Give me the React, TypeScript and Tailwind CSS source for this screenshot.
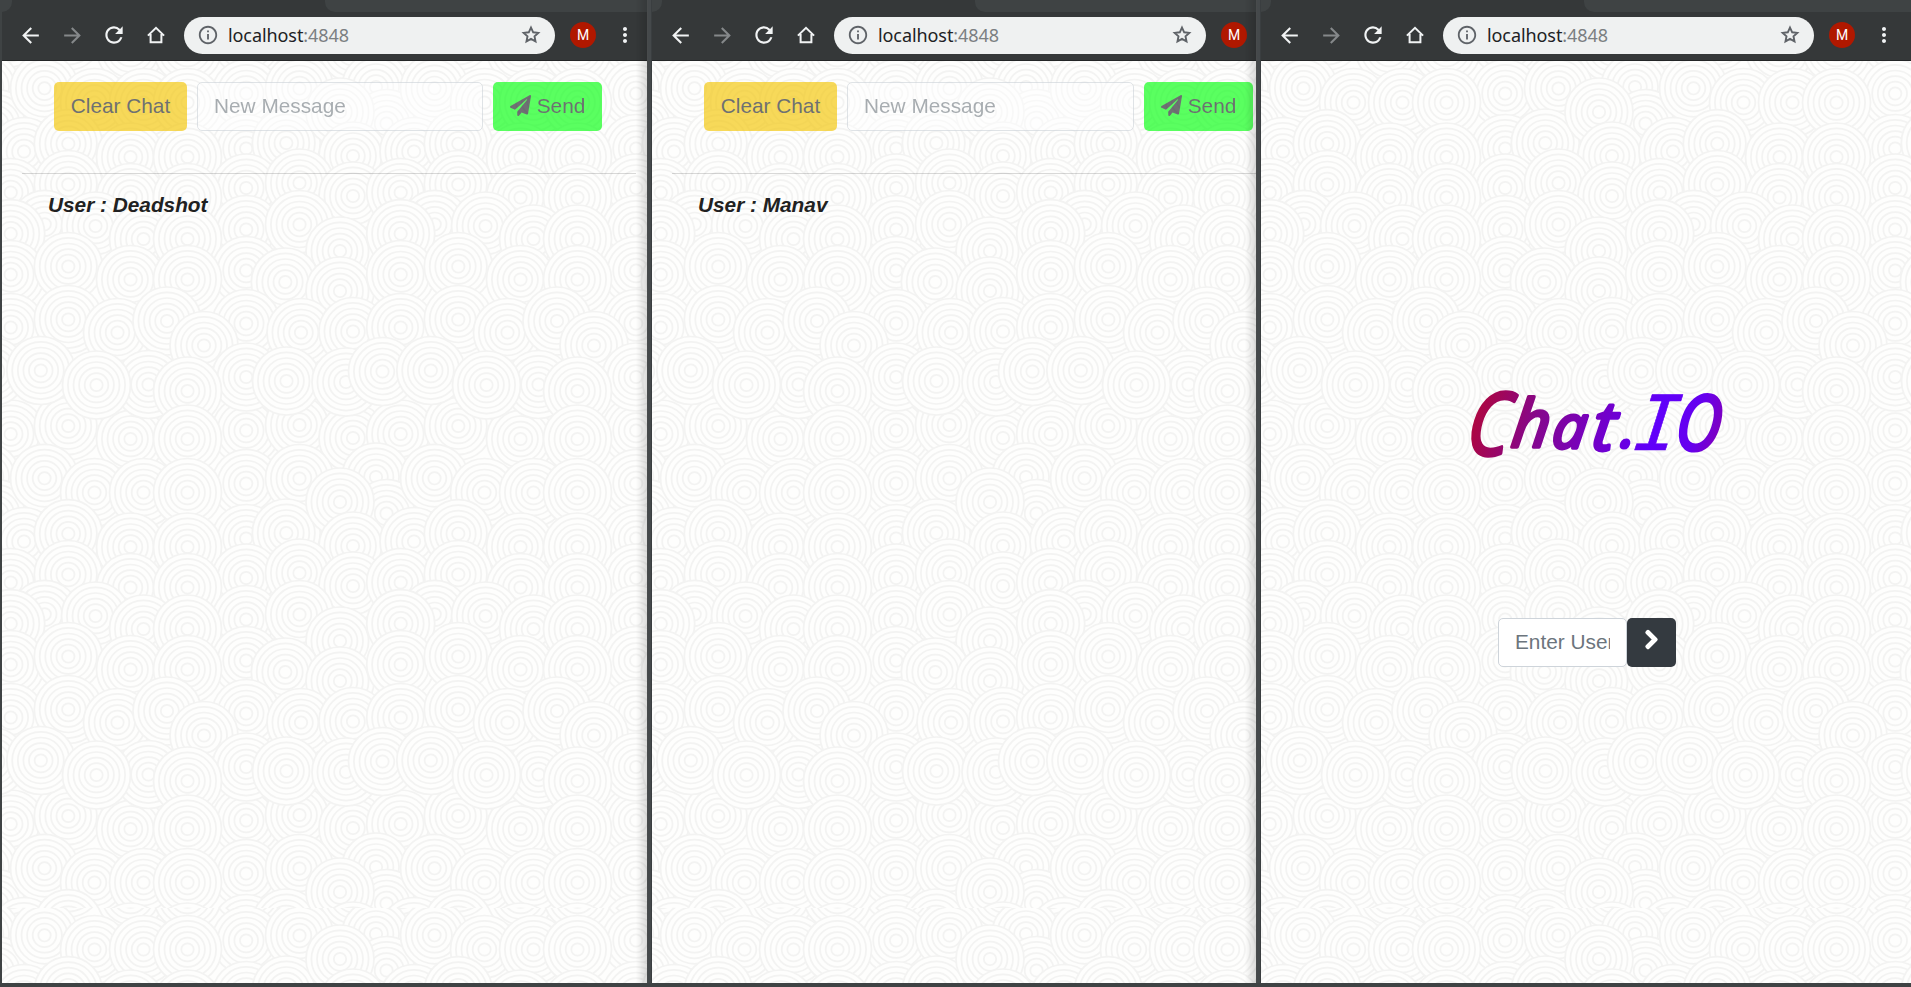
import type { ReactNode } from "react";
import {
  MdArrowBack,
  MdArrowForward,
  MdInfoOutline,
  MdMoreVert,
  MdRefresh,
} from "react-icons/md";
import { FaChevronRight, FaPaperPlane } from "react-icons/fa";

type Point = [number, number];

const TILE = 390;
const RADII = [28.6, 23, 17.4, 11.8, 6.2];

// Centres of the wallpaper's discs, in painting order; each layer wraps horizontally.
const LAYERS: Point[][] = [
  [[374, 26], [384.5, 62.5], [244.2, 32.5]],
  [[297.5, 27.5], [432.5, 27.3], [482.5, 41.5], [531.5, 41.5], [575.5, 41.5]],
  [[244.2, 87.5], [284.3, 82], [338, 51]],
  [[351, 95], [412, 90.5], [456.3, 82.7], [518.5, 96], [575.5, 96]],
  [[244.2, 127]],
  [[297.5, 122], [351, 135], [398.7, 131.5], [456.3, 123.5], [518.5, 136.5], [575.5, 136.5]],
  [[244.2, 168.5]],
  [[297.5, 163.5], [338, 190], [432.7, 163.3], [398.7, 172.7], [483.5, 165], [531.5, 178], [575.5, 178]],
  [[244.2, 209.5]],
  [[283.3, 221], [338, 230], [398.7, 213.5], [456.3, 205.5], [518.5, 218.5], [575.5, 218.5]],
  [[244.2, 262.5]],
  [[299, 271.5], [351, 270.5], [398.7, 266.5], [456.3, 258.5], [505.5, 271.5], [555, 260], [592, 284.5]],
  [[244.2, 369.5]],
  [[297.5, 364], [351, 377], [398.7, 373], [456.3, 365], [518.5, 378]],
  [[244.2, 316]],
  [[284.5, 320], [344, 321], [380.5, 310.5], [428.8, 309.5], [536.5, 323.5], [484.5, 324], [575.5, 330]],
  [[185.5, 378]],
];

const DISCS: Point[] = [-1, 0, 1].flatMap((row) =>
  LAYERS.flatMap((layer) =>
    [-2, -1, 0, 1].flatMap((col) =>
      layer.map(([x, y]): Point => [x + col * TILE, y + row * TILE]),
    ),
  ),
).filter(([x, y]) => x > -36 && x < TILE + 36 && y > -36 && y < TILE + 36);

function Wallpaper({ id }: { id: string }) {
  return (
    <svg className="absolute inset-0 h-full w-full" aria-hidden="true">
      <defs>
        <pattern id={id} width={TILE} height={TILE} patternUnits="userSpaceOnUse">
          <rect width={TILE} height={TILE} fill="#fefefd" />
          {DISCS.map(([x, y], i) => (
            <g key={i} stroke="#f3f3f2" strokeWidth="1.7" fill="#fefefd">
              <circle cx={x} cy={y} r="34" />
              {RADII.map((r) => (
                <circle key={r} cx={x} cy={y} r={r} fill="none" />
              ))}
            </g>
          ))}
        </pattern>
      </defs>
      <rect width="100%" height="847" fill={`url(#${id})`} />
      <g transform="translate(0 847)">
        <rect width="100%" height="100" fill={`url(#${id})`} />
      </g>
    </svg>
  );
}

function HomeIcon() {
  return (
    <svg width="18" height="18" viewBox="0 0 18 18" fill="none" stroke="#f1f3f4" strokeWidth="2">
      <path d="M0.9 9.6 9 1.8l8.100 7.800M3.600 8v8.200h10.800V8" />
    </svg>
  );
}

function StarIcon() {
  return (
    <svg width="22" height="22" viewBox="0 0 22 22" fill="none" stroke="#5f6368" strokeWidth="1.9">
      <path d="M11 3.600 13.200 8.300 18.300 8.900 14.500 12.300 15.500 17.300 11 14.800 6.500 17.300 7.500 12.300 3.700 8.900 8.800 8.300Z" />
    </svg>
  );
}

function Toolbar({ wide }: { wide?: boolean }) {
  return (
    <div className="shrink-0 bg-[#353839]">
      <div className="flex h-3 justify-between">
        <div className="w-[10px] rounded-br-[10px] bg-[#3f4344]" />
        <div className="w-[327px] rounded-bl-[10px] bg-[#3f4344]" />
      </div>
      <div className="flex h-[49px] items-center border-b border-[#242627] pb-[2px] text-[#f1f3f4]">
        <div className="flex w-[182px] items-center pl-4">
          <MdArrowBack size={25} />
          <MdArrowForward size={25} className="ml-[17px] text-[#85888a]" />
          <MdRefresh size={26} className="ml-4" />
          <span className="ml-5">
            <HomeIcon />
          </span>
        </div>
        <div
          className={`flex h-[37px] shrink-0 items-center rounded-full bg-[#eff1f1] pr-[13px] pl-[13px] text-[#5f6368] ${wide ? "w-[372px]" : "w-[371px]"}`}
        >
          <MdInfoOutline size={22} />
          <span className="ml-[9px] flex-1 font-['Noto_Sans','Open_Sans',sans-serif] text-[18px] leading-none tracking-[-0.080px] text-[#7b7f82]">
            <span className="text-[#202124]">localhost</span>:4848
          </span>
          <StarIcon />
        </div>
        <div className="ml-[15px] flex size-[26px] shrink-0 items-center justify-center rounded-full bg-[#b01800] font-['Roboto',sans-serif] text-[14px] text-white">
          M
        </div>
        <MdMoreVert size={24} className="ml-[17px] shrink-0" />
      </div>
    </div>
  );
}

function Browser({ id, wide, children }: { id: string; wide?: boolean; children: ReactNode }) {
  return (
    <div className="flex h-full w-[650px] shrink-0 flex-col">
      <Toolbar wide={wide} />
      <div className="relative flex-1 overflow-hidden">
        <Wallpaper id={id} />
        <div className="relative h-full">{children}</div>
      </div>
    </div>
  );
}

function ChatPage({ user, wide }: { user: string; wide?: boolean }) {
  return (
    <div className="pt-[21px] pl-5 text-[20.8px]">
      <div className="flex h-[49px] gap-[10px] pl-8 opacity-65">
        <button className="w-[133px] rounded-[5px] bg-[#f3c500] pb-[2px] text-[#212529]">Clear Chat</button>
        <input
          className={`rounded-[5px] border border-[#ced4da] bg-white/70 px-4 pb-[2px] placeholder:text-[#6c757d] placeholder:opacity-90 ${wide ? "w-[287px]" : "w-[286px]"}`}
          placeholder="New Message"
        />
        <button className="flex w-[109px] items-center justify-center gap-[6px] rounded-[5px] bg-[#00ff0c] pb-[2px] text-[#212529]">
          <FaPaperPlane size={21} />
          Send
        </button>
      </div>
      <div className="mt-[42px] h-px w-[614px] bg-black/15" />
      <p className="mt-4 pl-[26px] leading-[30px] font-bold text-[#212121] italic">User : {user}</p>
    </div>
  );
}

function Title() {
  return (
    <svg width="270" height="90" viewBox="0 0 270 90" className="overflow-visible">
      <defs>
        <linearGradient id="title" gradientUnits="userSpaceOnUse" x1="8" y1="20" x2="262" y2="60">
          <stop offset="0" stopColor="#b0063c" />
          <stop offset="0.25" stopColor="#86078a" />
          <stop offset="0.5" stopColor="#7400c6" />
          <stop offset="0.72" stopColor="#6000fa" />
          <stop offset="0.88" stopColor="#6600ee" />
          <stop offset="1" stopColor="#8400b4" />
        </linearGradient>
      </defs>
      <text
        transform="translate(7 0) skewX(-7)"
        fill="url(#title)"
        stroke="url(#title)"
        strokeWidth="3.600"
        strokeLinejoin="round"
        className="font-['Open_Sans','Noto_Sans',sans-serif] italic"
      >
        <tspan x="5" y="74" fontSize="87" textLength="42" lengthAdjust="spacingAndGlyphs">C</tspan>
        <tspan x="49" y="66" fontSize="66">h</tspan>
        <tspan x="90" y="67" fontSize="60">a</tspan>
        <tspan x="130" y="69" fontSize="68">t</tspan>
        <tspan x="159" y="66" fontSize="58">.</tspan>
        <tspan x="172" y="69" fontSize="76" strokeWidth="0.6" className="font-['DejaVu_Sans_Mono',monospace]">I</tspan>
        <tspan x="213" y="69" fontSize="76" textLength="45" lengthAdjust="spacingAndGlyphs">O</tspan>
      </text>
    </svg>
  );
}

function LoginPage() {
  return (
    <div className="flex w-[650px] flex-col pt-[320px]">
      <div className="ml-[201px] h-[237px]">
        <Title />
      </div>
      <div className="ml-[237px] flex h-[49px] text-[20.8px]">
        <input
          className="w-[129px] rounded-[5px] border border-[#ced4da] bg-white px-4 pb-[2px] placeholder:text-[#6c757d]"
          placeholder="Enter Username"
        />
        <button className="flex w-[49px] items-center justify-center rounded-[5px] bg-[#343a40] pb-[7px] text-white">
          <FaChevronRight size={21} className="stroke-current stroke-[36]" />
        </button>
      </div>
    </div>
  );
}

function Divider() {
  return (
    <div className="relative w-[5px] shrink-0 border-r border-l border-r-[#3a3e40] border-l-[#55585a] bg-[#45494b]">
      <div className="absolute inset-y-0 right-full w-3 bg-linear-to-r from-transparent to-black/15" />
    </div>
  );
}

export default function App() {
  return (
    <div className="flex h-[987px] w-[1911px] overflow-hidden border-b-4 border-l-2 border-[#3f4344] bg-[#3f4344] font-['Liberation_Sans',Arial,sans-serif]">
      <div className="w-[645px] shrink-0 overflow-hidden">
        <Browser id="rings-left">
          <ChatPage user="Deadshot" />
        </Browser>
      </div>
      <Divider />
      <div className="w-[604px] shrink-0 overflow-hidden">
        <Browser id="rings-middle" wide>
          <ChatPage user="Manav" wide />
        </Browser>
      </div>
      <Divider />
      <div className="w-[650px] shrink-0 overflow-hidden">
        <Browser id="rings-right">
          <LoginPage />
        </Browser>
      </div>
    </div>
  );
}
